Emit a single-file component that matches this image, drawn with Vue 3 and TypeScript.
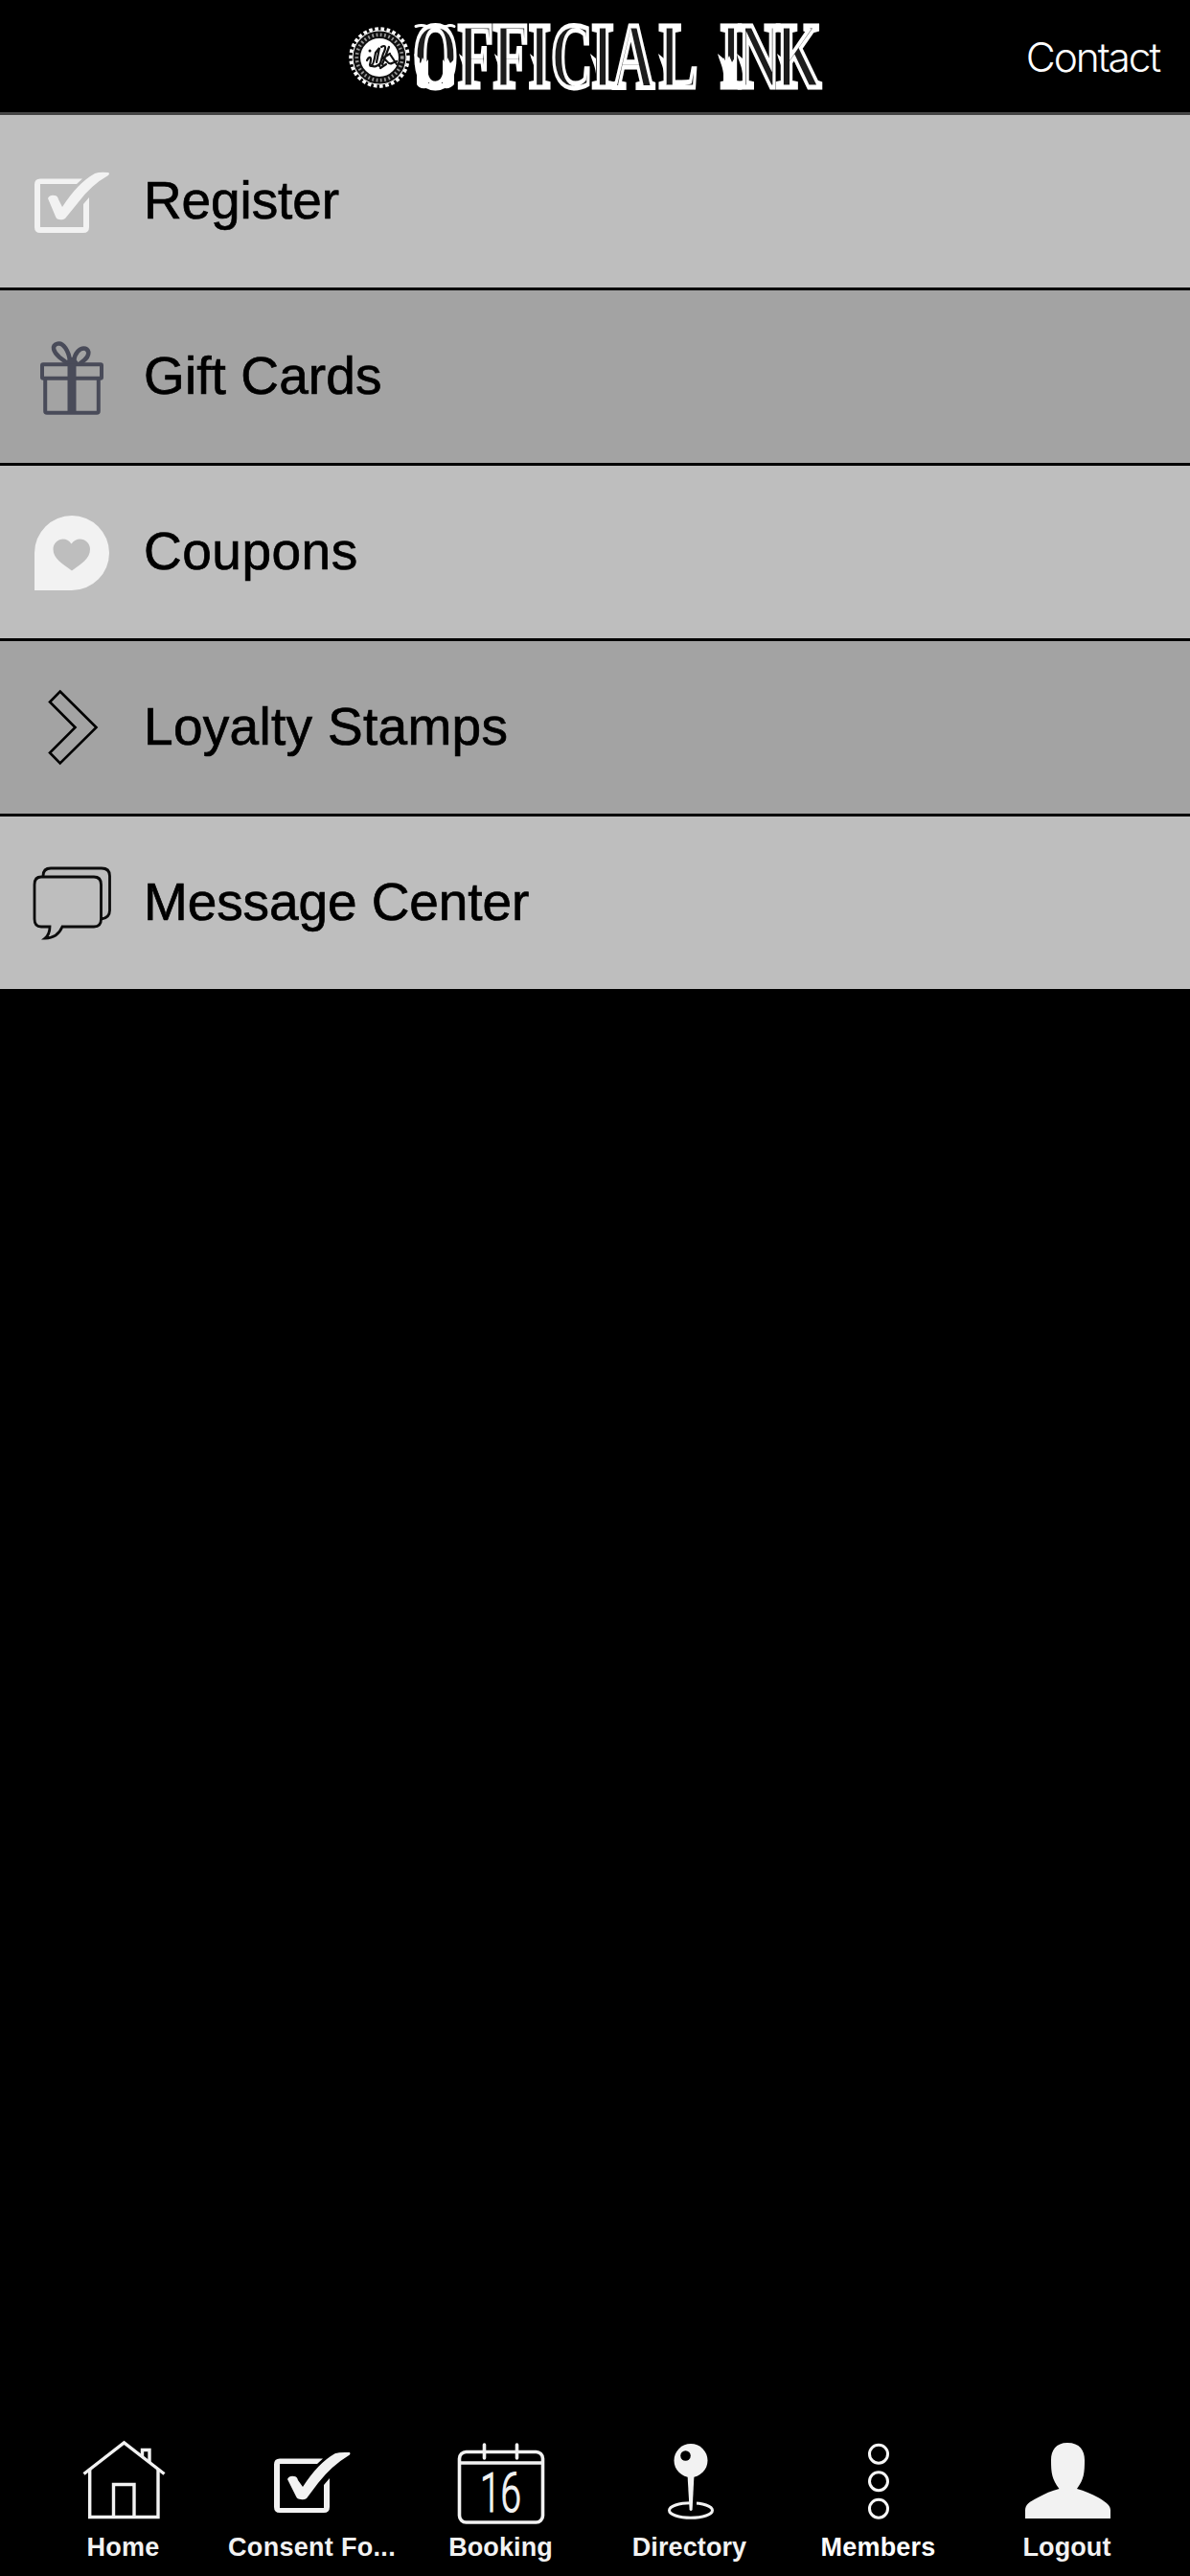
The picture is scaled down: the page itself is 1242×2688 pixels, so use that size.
<script setup lang="ts">
interface MenuItem {
  id: string
  label: string
  spacing: number
}
interface Tab {
  id: string
  label: string
  spacing: number
}

const menu: MenuItem[] = [
  { id: 'register', label: 'Register', spacing: -0.1 },
  { id: 'gift', label: 'Gift Cards', spacing: 0.1 },
  { id: 'coupons', label: 'Coupons', spacing: 0.5 },
  { id: 'loyalty', label: 'Loyalty Stamps', spacing: 0.3 },
  { id: 'message', label: 'Message Center', spacing: -0.1 },
]

const tabs: Tab[] = [
  { id: 'home', label: 'Home', spacing: 0.2 },
  { id: 'consent', label: 'Consent Fo...', spacing: 0.3 },
  { id: 'booking', label: 'Booking', spacing: 0.1 },
  { id: 'directory', label: 'Directory', spacing: 0.1 },
  { id: 'members', label: 'Members', spacing: 0.2 },
  { id: 'logout', label: 'Logout', spacing: 0.1 },
]

/* left edges of the lettering's stems, where the thorn ornaments sit */
const thorns: number[] = [74, 121, 158, 195, 258, 329, 391, 411, 453]
</script>

<template>
  <div class="app">
    <header class="bar">
      <svg class="logo" width="510" height="117" viewBox="0 0 510 117">
        <circle cx="33" cy="60" r="30" fill="none" stroke="#fff" stroke-width="3.500" stroke-dasharray="3.600 2.600" />
        <circle cx="33" cy="60" r="28.500" fill="#fff" />
        <circle cx="33" cy="60" r="23.700" fill="none" stroke="#111" stroke-width="7.500" />
        <circle cx="33" cy="60" r="23.700" fill="none" stroke="#999" stroke-width="3.600" stroke-dasharray="1.700 2.600" />
        <path
          d="M20 63c2-4 4-4 4-1s-2 7 0 7 4-8 5-14l4-5-3 15M35 49c5-3 5 1 2 7l-4 13M43 49l-7 18M44 56l-8 5c4-1 6 8 10 5l5-2M23 67c4 5 9 1 11-1m6 1-6 4M45 58l6 9"
          fill="none" stroke="#111" stroke-width="2.200" stroke-linecap="round"
        />
        <circle cx="23" cy="53" r="1.500" fill="#111" />
        <text
          class="word" transform="translate(68 91) scale(0.615 1)"
          dx="0 0 0 0 0 -2 -2 8 0 13 -7 -6"
        >OFFICIAL INK</text>
        <g fill="#fff">
          <path v-for="x in thorns" :key="x" :d="`M${x - 5} 56l6 5v16c-1-9-4-13-6-21z`" />
          <path d="M72 62l4 4 2-6 3 6 3-4v25h15V62l3 4 2-6 3 6 4-4v26q-4 5-10 4H82q-8 1-10-4zM392 89V60l3 5 3-7 3 7 3-5v29z" />
        </g>
        <path
          d="M71 27.500q6-2 11 0 10 2 21 0 4-2 8 0" fill="none" stroke="#fff" stroke-width="3"
          stroke-linecap="round"
        />
      </svg>
      <a class="contact">Contact</a>
    </header>

    <ul class="menu">
      <li v-for="m in menu" :key="m.id" class="row">
        <svg class="row-icon" width="150" height="180" viewBox="0 0 150 180">
          <template v-if="m.id === 'register'">
            <path d="M86 66.500H42q-6 0-6 6V117q0 6 6 6h45q6 0 6-6V86l-6 7v24H42V72h38z" fill="#f2f2f2" />
            <path d="M50 87q2-4 7-3 3 0 4 4l4 8Q81 71 99 61q5-2 14-1 2 1 0 3Q95 73 81 92L68 108q-3 2-6 1-3 0-4-3z" fill="#f2f2f2" />
          </template>
          <g v-else-if="m.id === 'gift'" fill="none" stroke="#494b59" stroke-width="4" transform="translate(0 -10.300)">
            <rect x="44" y="87.500" width="62" height="14.500" rx="1" />
            <path d="M47.200 103v33.200q0 1.800 1.800 1.800h52q1.800 0 1.800-1.800V103" />
            <path d="M75 87v51" stroke-width="9" />
            <path d="M73 84c-1-10-7-20-13-18-7 2-4 9 2 14l8 6M77 84c1-8 6-14 12-13 5 2 4 8-1 12l-5 4" stroke-width="4.500" />
            <path d="m68 87 3-5 4-2 4 2 4 5z" fill="#494b59" stroke="none" />
          </g>
          <path
            v-else-if="m.id === 'coupons'"
            d="M36 130V91a39 39 0 1 1 39 39zM75 109.500C65 102 55.500 97 55.500 87c0-10 13-15 19-5.500C81 72 94 77 94 87c0 10-9 15-19 22.500z"
            fill="#f2f2f2" fill-rule="evenodd"
          />
          <path
            v-else-if="m.id === 'loyalty'"
            d="M62.700 52.500 100.500 90 62.700 127.500 52 116.500 78.500 90 52 63.500z"
            fill="none" stroke="#000" stroke-width="2.600"
          />
          <g v-else fill="none" stroke="#0c0c0c" stroke-width="2.800">
            <path d="M45 62q0-8 8-8h53q8.500 0 8.500 8v36q0 8-9 9" />
            <path d="M43 63h55q7.500 0 7.500 8v36q0 8-7.500 8H65q-5 12-18 12 5-4 5-12h-9q-7 0-7-8V71q0-8 7-8z" />
          </g>
        </svg>
        <span class="row-label" :style="{ letterSpacing: m.spacing + 'px' }">{{ m.label }}</span>
      </li>
    </ul>

    <nav class="tabs">
      <a v-for="t in tabs" :key="t.id" class="tab" :class="t.id">
        <svg width="120" height="100" viewBox="0 0 120 100">
          <g v-if="t.id === 'home'" fill="none" stroke="#f2f2f2" stroke-width="3.400">
            <path d="M18.500 41.500 60.500 9l42 32.500" />
            <path d="M24.700 37v49.500H96V37M49.500 86V52.500H71V86" />
            <path d="M79.500 23v-6.500H87v13" />
          </g>
          <g v-else-if="t.id === 'consent'" fill="#f2f2f2">
            <path d="M71 25.500H26q-6 0-6 6V76q0 6 6 6h46q6 0 6-6V46l-6 7v24H26V31h39z" />
            <path d="M34 47q2-4 7-3 3 0 4 4l5 7Q66 30 84 20q4-1.500 15-1 1 1 0 2.500Q80 33 66 51L54 67q-3 2-6 1-4 0-5-3z" />
          </g>
          <g v-else-if="t.id === 'booking'" fill="none" stroke="#f2f2f2" stroke-width="3.600">
            <rect x="16.500" y="18.500" width="87" height="73.500" rx="7" />
            <path d="M17 30h86" />
            <path d="M42.500 11v14M76.500 11v14" stroke-linecap="round" />
            <text class="day" x="38" y="80.500" textLength="43" lengthAdjust="spacingAndGlyphs">16</text>
          </g>
          <g v-else-if="t.id === 'directory'">
            <ellipse cx="61" cy="79.500" rx="22.500" ry="7.800" fill="none" stroke="#f2f2f2" stroke-width="3" />
            <path d="M60 68h7v7h-7z" fill="#000" />
            <circle cx="61" cy="27.500" r="17.500" fill="#f2f2f2" />
            <path d="M57.500 42h7L62.600 79q-1.600 2-3 0z" fill="#f2f2f2" />
            <circle cx="55.500" cy="22.500" r="5.300" fill="#000" />
          </g>
          <g v-else-if="t.id === 'members'" fill="none" stroke="#f8f8f8" stroke-width="3">
            <circle cx="60" cy="20.700" r="9.500" />
            <circle cx="60" cy="49.200" r="9.500" />
            <circle cx="60" cy="77.700" r="9.500" />
          </g>
          <path
            v-else
            d="M60 9c-12 0-17 8-17 18 0 14 1 20 8.500 30-8 2-15 5-23 9.500-8 4-12.500 7-12.500 13V88h89v-8.500c0-5-4-8-12-13-8-4-15-7.500-23-9.500C77.500 47 78 40 78 27 78 17 73 9 60 9z"
            fill="#f2f2f2"
          />
        </svg>
        <span class="tab-label" :style="{ letterSpacing: t.spacing + 'px' }">{{ t.label }}</span>
      </a>
    </nav>
  </div>
</template>

<style>
body {
  margin: 0;
  background: #000;
}
</style>

<style scoped>
.app {
  display: flex;
  flex-direction: column;
  width: 1242px;
  height: 2688px;
  overflow: hidden;
  background: #000;
  font-family: 'Liberation Sans', Arial, sans-serif;
}
.bar {
  display: flex;
  align-items: center;
  justify-content: space-between;
  box-sizing: border-box;
  height: 120px;
  padding: 0 32px 0 363px;
  border-bottom: 3px solid #444;
}
.logo {
  display: block;
}
.word {
  font-family: 'Liberation Serif', serif;
  font-weight: 700;
  font-size: 98px;
  fill: #1c1c1c;
  stroke: #fff;
  stroke-width: 5px;
  font-kerning: none;
}
.contact {
  color: #fff;
  font-family: Inter, 'Liberation Sans', sans-serif;
  font-weight: 300;
  font-size: 42.500px;
  line-height: 60px;
  letter-spacing: -2.100px;
  padding-top: 2px;
}
.menu {
  display: flex;
  flex-direction: column;
  gap: 3px;
  margin: 0;
  padding: 0;
  list-style: none;
}
.row {
  display: flex;
  align-items: center;
  height: 180px;
  background: #bebebe;
}
.row:nth-child(even) {
  background: #a3a3a3;
}
.row-icon {
  display: block;
}
.row-label {
  color: #000;
  font-size: 55px;
  line-height: 60px;
  -webkit-text-stroke: 0.7px #000;
  padding-bottom: 2px;
  white-space: nowrap;
}
.tabs {
  display: flex;
  margin-top: auto;
  height: 148px;
  padding: 0 30px;
}
.tab {
  display: flex;
  flex: 1;
  flex-direction: column;
  align-items: center;
  gap: 2px;
  color: #f2f2f2;
}
.tab.members {
  color: #fff;
}
.tab svg {
  display: block;
}
.tab-label {
  font-size: 27px;
  font-weight: 700;
  line-height: 32px;
  white-space: nowrap;
}
.day {
  font-family: 'Roboto', sans-serif;
  font-weight: 300;
  font-size: 57px;
  fill: #f2f2f2;
  stroke: #f2f2f2;
  stroke-width: 1.200px;
}
</style>
